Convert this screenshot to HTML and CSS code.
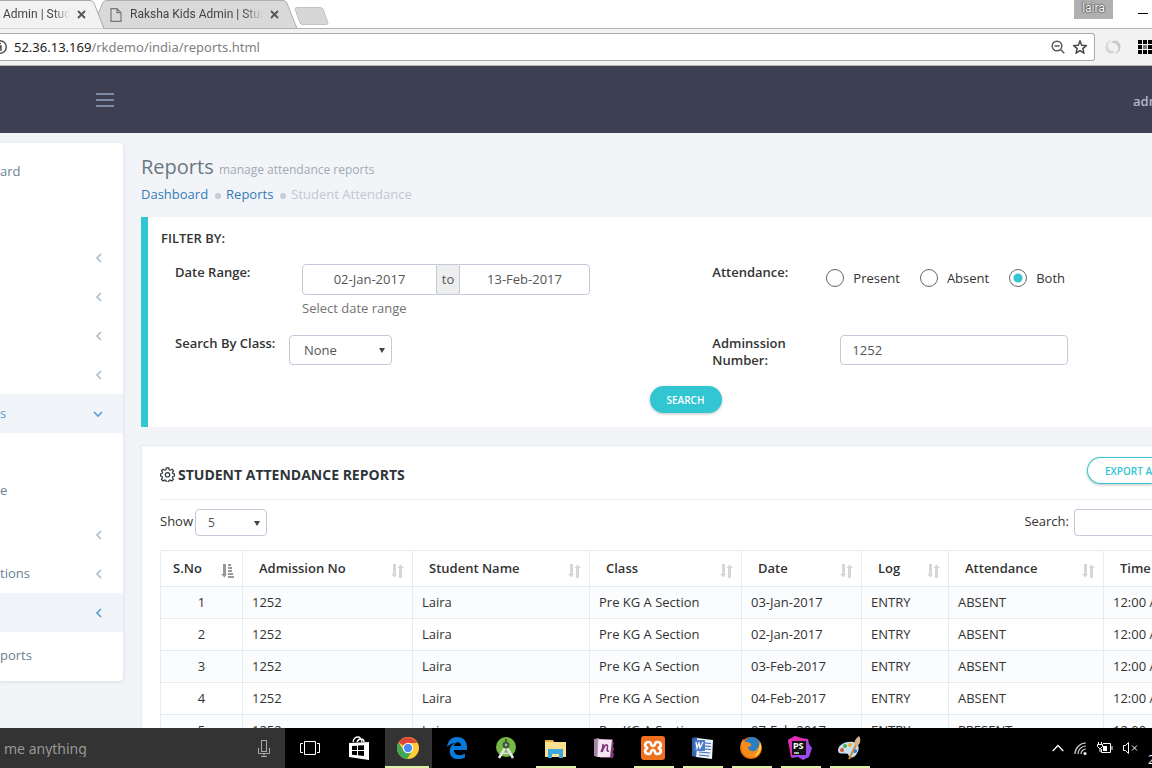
FILE: index.html
```
<!DOCTYPE html>
<html lang="en">
<head>
    <meta charset="UTF-8">
    <meta name="viewport" content="width=device-width, initial-scale=1.0">
    <title>Raksha Kids Admin | Student Attendance</title>
    <link rel="stylesheet" href="styles.css">
</head>
<body>
<svg class="sprite" aria-hidden="true">
    <symbol id="left" viewBox="0 0 8 10"><path d="M6 1L2 5l4 4" fill="none" stroke="currentColor" stroke-width="1.6"/></symbol>
    <symbol id="down" viewBox="0 0 10 8"><path d="M1 2l4 4 4-4" fill="none" stroke="currentColor" stroke-width="1.6"/></symbol>
    <symbol id="close" viewBox="0 0 9 9"><path d="M1 1l7 7M8 1L1 8" stroke="currentColor" stroke-width="1.8"/></symbol>
    <symbol id="sort" viewBox="0 0 13 14"><path d="M2 0h3v10h1L3.500 13.500 0 10h2zM8 14h3V4h2L9.500.5 6.500 4H8z" fill="#d6d6d6"/></symbol>
    <symbol id="sort-asc" viewBox="0 0 13 14"><path d="M2 0h3v10h1L3.500 13.500 0 10h2zM7 0h3v2H7zM7 3h4v2H7zM7 6h4v2H7zM7 9h5v2H7zM7 12h6v2H7z" fill="#999"/></symbol>
</svg>

<!-- browser -->
<div class="tabs">
    <div class="tab tab-active">
        <svg class="tab-shape" width="106" height="29" viewBox="0 0 106 29"><path d="M0 .5H90Q93 .5 94 3L104 28.500H0z" fill="#f2f2f2"/><path d="M0 .5H90Q93 .5 94 3L104 28.500" fill="none" stroke="#a9a9a9"/></svg>
        <span class="tab-title">Admin | Stud</span>
        <button class="tab-close" aria-label="Close tab"><svg width="9" height="9"><use href="#close"/></svg></button>
    </div>
    <div class="tab tab-back">
        <svg class="tab-shape" width="202" height="29" viewBox="0 0 202 29"><path d="M1 14L5.500 3Q6.500.5 10 .5H186Q189 .5 190 3L200 28.500H7z" fill="#d9d9d9" stroke="#b0b0b0"/></svg>
        <svg class="tab-page" width="12" height="14" viewBox="0 0 12 14"><path d="M1 .7h6l4 4v8.600H1zM7 .7v4h4" fill="none" stroke="#777" stroke-width="1.2"/></svg>
        <span class="tab-title">Raksha Kids Admin | Stud</span>
        <button class="tab-close" aria-label="Close tab"><svg width="9" height="9"><use href="#close"/></svg></button>
    </div>
    <button class="tab-new" aria-label="New tab"><svg width="36" height="18" viewBox="0 0 36 18"><path d="M1 2Q1 .5 3 .5H26Q28 .5 29 2L34 16Q34 17.500 32 17.500H9Q7 17.500 6 16z" fill="#d6d6d6" stroke="#c2c2c2"/></svg></button>
    <span class="user-chip">laira</span>
    <button class="minimize" aria-label="Minimize"></button>
</div>
<div class="toolbar">
    <div class="omnibox">
        <svg width="8" height="16" viewBox="8 0 8 16"><circle cx="8" cy="8" r="6.300" fill="none" stroke="#555" stroke-width="1.5"/><path d="M8 4.500h1M8 7h1v5" stroke="#555" stroke-width="1.5"/></svg>
        <span class="url">52.36.13.169<span class="path">/rkdemo/india/reports.html</span></span>
        <svg class="zoom" width="14" height="14" viewBox="0 0 14 14"><g fill="none" stroke="#555" stroke-width="1.4"><circle cx="6" cy="6" r="4.800"/><path d="M3.500 6h5M9.500 9.500L13.300 13.300"/></g></svg>
        <svg width="14" height="14" viewBox="0 0 14 14"><path d="M7 1l1.700 4.300 4.600.3-3.500 3 1.100 4.500L7 10.600l-3.900 2.500 1.100-4.500-3.500-3 4.600-.3z" fill="none" stroke="#444" stroke-width="1.4"/></svg>
    </div>
    <svg class="ext" width="16" height="16" viewBox="0 0 16 16"><path d="M7 1A7 7 0 0 0 5 14.500Q9 15 10 12A5 5 0 0 1 7 1z" fill="#d6d6d6"/><path d="M9 15A7 7 0 0 0 11 1.500Q7 1 6 4A5 5 0 0 1 9 15z" fill="#c8c8c8"/></svg>
    <svg class="apps" width="14" height="14" viewBox="0 0 14 14"><path d="M0 0h4v4H0zM5 0h4v4H5zM10 0h4v4h-4zM0 5h4v4H0zM10 5h4v4h-4zM0 10h4v4H0zM5 10h4v4H5zM10 10h4v4h-4z" fill="#000"/><path d="M5 5h4v4H5z" fill="#777"/></svg>
</div>

<!-- site -->
<header class="header">
    <button class="menu-toggle" aria-label="Toggle menu"><i></i><i></i><i></i></button>
    <a class="account" href="#">admin</a>
</header>
<div class="page">
    <nav class="sidebar">
        <ul class="nav">
            <li><a href="#">ard</a></li>
            <li class="nav-heading"></li>
            <li><a href="#" aria-label="Section"><svg width="8" height="10"><use href="#left"/></svg></a></li>
            <li><a href="#" aria-label="Section"><svg width="8" height="10"><use href="#left"/></svg></a></li>
            <li><a href="#" aria-label="Section"><svg width="8" height="10"><use href="#left"/></svg></a></li>
            <li><a href="#" aria-label="Section"><svg width="8" height="10"><use href="#left"/></svg></a></li>
            <li class="active"><a href="#">s<svg width="10" height="8"><use href="#down"/></svg></a>
                <ul class="sub">
                    <li><a href="#">e</a></li>
                </ul>
            </li>
            <li><a href="#" aria-label="Section"><svg width="8" height="10"><use href="#left"/></svg></a></li>
            <li><a href="#">tions<svg width="8" height="10"><use href="#left"/></svg></a></li>
            <li class="active"><a href="#" aria-label="Section"><svg width="8" height="10"><use href="#left"/></svg></a>
                <ul class="sub sub-last">
                    <li><a href="#">ports</a></li>
                </ul>
            </li>
        </ul>
    </nav>

    <main class="content">
        <h1>Reports <small>manage attendance reports</small></h1>
        <ul class="breadcrumb">
            <li><a href="#">Dashboard</a></li>
            <li><a href="#">Reports</a></li>
            <li>Student Attendance</li>
        </ul>

        <form class="filter">
            <h2>FILTER BY:</h2>
            <div class="filter-grid">
                <div class="field date-field">
                    <label class="name" for="from">Date Range:</label>
                    <div class="range">
                        <div class="input-group">
                            <input type="text" id="from" value="02-Jan-2017">
                            <span class="addon">to</span>
                            <input type="text" aria-label="To date" value="13-Feb-2017">
                        </div>
                        <span class="help">Select date range</span>
                    </div>
                </div>
                <div class="field">
                    <span class="name" id="att">Attendance:</span>
                    <div class="radios" role="radiogroup" aria-labelledby="att">
                        <label><input type="radio" name="attendance">Present</label>
                        <label><input type="radio" name="attendance">Absent</label>
                        <label><input type="radio" name="attendance" checked>Both</label>
                    </div>
                </div>
                <div class="field class-field">
                    <label class="name" for="class">Search By Class:</label>
                    <div class="select"><select id="class"><option>None</option></select></div>
                </div>
                <div class="field">
                    <label class="name" for="admission">Adminssion Number:</label>
                    <input type="text" class="admission" id="admission" value="1252">
                </div>
            </div>
            <button type="button" class="btn btn-search">SEARCH</button>
        </form>

        <section class="card">
            <div class="card-title">
                <svg width="15" height="15" viewBox="0 0 15 15"><g fill="none" stroke="#2f353b" stroke-width="1.2"><path d="M6.300.8h2.400l.4 1.900 1.200.5 1.700-1 1.500 1.600-1 1.600.5 1.200 1.600.3v2.200l-1.700.4-.5 1.200 1 1.600-1.600 1.600-1.600-1-1.200.5-.4 1.700H6.300l-.4-1.700-1.200-.5-1.600 1-1.600-1.600 1-1.600L2 9.500.500 9.100V6.900L2 6.600l.5-1.300-1-1.600L3.100 2.200l1.600 1 1.200-.5z"/><circle cx="7.500" cy="7.800" r="2.200"/></g></svg>
                <h2>STUDENT ATTENDANCE REPORTS</h2>
                <button class="btn btn-export">EXPORT AS</button>
            </div>
            <div class="table-tools">
                <label for="len">Show</label>
                <div class="select select-small"><select id="len"><option>5</option></select></div>
                <label class="search-label" for="q">Search:</label>
                <input type="search" id="q">
            </div>
            <table>
                <colgroup><col class="c-no"><col class="c-adm"><col class="c-name"><col class="c-class"><col class="c-date"><col class="c-log"><col class="c-att"><col></colgroup>
                <thead>
                <tr>
                    <th><span>S.No<svg width="13" height="14"><use href="#sort-asc"/></svg></span></th>
                    <th><span>Admission No<svg width="13" height="14"><use href="#sort"/></svg></span></th>
                    <th><span>Student Name<svg width="13" height="14"><use href="#sort"/></svg></span></th>
                    <th><span>Class<svg width="13" height="14"><use href="#sort"/></svg></span></th>
                    <th><span>Date<svg width="13" height="14"><use href="#sort"/></svg></span></th>
                    <th><span>Log<svg width="13" height="14"><use href="#sort"/></svg></span></th>
                    <th><span>Attendance<svg width="13" height="14"><use href="#sort"/></svg></span></th>
                    <th><span>Time</span></th>
                </tr>
                </thead>
                <tbody>
                <tr><td>1</td><td>1252</td><td>Laira</td><td>Pre KG A Section</td><td>03-Jan-2017</td><td>ENTRY</td><td>ABSENT</td><td>12:00 AM</td></tr>
                <tr><td>2</td><td>1252</td><td>Laira</td><td>Pre KG A Section</td><td>02-Jan-2017</td><td>ENTRY</td><td>ABSENT</td><td>12:00 AM</td></tr>
                <tr><td>3</td><td>1252</td><td>Laira</td><td>Pre KG A Section</td><td>03-Feb-2017</td><td>ENTRY</td><td>ABSENT</td><td>12:00 AM</td></tr>
                <tr><td>4</td><td>1252</td><td>Laira</td><td>Pre KG A Section</td><td>04-Feb-2017</td><td>ENTRY</td><td>ABSENT</td><td>12:00 AM</td></tr>
                <tr><td>5</td><td>1252</td><td>Laira</td><td>Pre KG A Section</td><td>07-Feb-2017</td><td>ENTRY</td><td>PRESENT</td><td>12:00 AM</td></tr>
                </tbody>
            </table>
        </section>
    </main>
</div>

<!-- taskbar -->
<footer class="taskbar">
    <div class="cortana">
        <input type="text" aria-label="Search" placeholder="me anything">
        <svg width="12" height="17" viewBox="0 0 12 17"><g fill="none" stroke="#aaa"><rect x="3.500" y=".5" width="5" height="11"/><path d="M.5 8v5.500h11V8M6 13.500v3M3 16.500h6"/></g></svg>
    </div>
    <button class="task" aria-label="Task view"><svg width="20" height="14" viewBox="0 0 20 14"><path d="M4.500.5h11v13h-11zM3 2.500H.5v9H3M17 2.500h2.500v9H17" fill="none" stroke="#fff"/></svg></button>
    <button class="task" aria-label="Store"><svg width="22" height="24" viewBox="0 0 22 24"><path d="M5 6Q6 1 10 1q3 0 4 5M9 6q1-3 4-3 3 0 3 3" fill="none" stroke="#fff" stroke-width="1.3"/><path d="M1 7l20-1v18L1 21z" fill="#fff"/><path d="M4 10l5-.3V14H4zM10 9.600l6-.4V14h-6zM4 15h5v4.200L4 18.700zM10 15h6v5l-6-.7z" fill="#000"/></svg></button>
    <button class="task open current" aria-label="Chrome"><svg width="22" height="22" viewBox="0 0 22 22"><circle cx="11" cy="11" r="11" fill="#fc3"/><path d="M11 11L1.500 5.500A11 11 0 0 1 20.500 6H11z" fill="#e0453a"/><path d="M1.500 5.500A11 11 0 0 0 10 22l5.500-8.500-4.500 2-4-1.500z" fill="#3fa757"/><circle cx="11" cy="11" r="5.200" fill="#fff"/><circle cx="11" cy="11" r="4.200" fill="#4a8af4"/></svg></button>
    <button class="task" aria-label="Edge"><svg width="22" height="22" viewBox="0 0 22 22"><path d="M1 10C2 3 6 0 11 0c7 0 10 5 10 10v3H8c0 6 7 6 11 3.500v4C10 25 2 20 4 12c.5-3 3-5 5-6-3 0-6 2-8 4zM8 9h7c0-5-6-5-7 0z" fill="#0a78d7"/></svg></button>
    <button class="task" aria-label="Android Studio"><svg width="22" height="24" viewBox="0 0 22 24"><circle cx="11" cy="11" r="10" fill="#75b843"/><path d="M10 12L4 22M12 12l6 10" stroke="#e6e6e6" stroke-width="2.500"/><path d="M6 16q5 3 10 0" fill="none" stroke="#ddd" stroke-width="1.500"/><path d="M11 3v4" stroke="#455a45" stroke-width="2"/><circle cx="11" cy="9" r="3.500" fill="#455a45"/><circle cx="11" cy="9" r="1.200" fill="#9c9"/></svg></button>
    <button class="task open" aria-label="Explorer"><svg width="22" height="19" viewBox="0 0 22 19"><path d="M1 1h8l1 2h12v15H1z" fill="#fbe08f"/><path d="M1 1h8v2H1z" fill="#e8b33c"/><path d="M4 10h15v9h-4v-4H8v4H4z" fill="#39a9e0"/></svg></button>
    <button class="task" aria-label="OneNote"><svg width="22" height="22" viewBox="0 0 22 22"><path d="M7 2h13v3l1 1-1 3 1 3-1 3 1 2-1 4H7z" fill="#80397b"/><path d="M1 2l5-1v19l-5-1z" fill="#a684a8"/><path d="M5 2l14 1-2 17H4z" fill="#f3e9f3"/><path d="M5 2l-1 18" stroke="#b99cba"/><path d="M8 15c2-3 2-5 2-8 0 4 0 6-1 8 2-5 3-8 5-7 2 1-2 7 2 6" fill="none" stroke="#80397b" stroke-width="1.600"/></svg></button>
    <button class="task open" aria-label="XAMPP"><svg width="24" height="24" viewBox="0 0 24 24"><rect width="24" height="24" rx="3" fill="#ef7120"/><path d="M8 6c-5 0-5 5-1 6-4 1-4 6 1 6 3 0 1-4 4-4s1 4 4 4c5 0 5-5 1-6 4-1 4-6-1-6-3 0-1 4-4 4s-1-4-4-4z" fill="none" stroke="#fff" stroke-width="2.600"/></svg></button>
    <button class="task open" aria-label="Word"><svg width="22" height="22" viewBox="0 0 22 22"><path d="M6 1l16 2-1 19-16-2z" fill="#eef3fb"/><path d="M14 6l6 .5M14 9l6 .5M14 12l6 .5M8 15l11 1M8 18l10 1" stroke="#3c6cb5" stroke-width="1.200"/><path d="M1 1l5-1-1 20-4-1z" fill="#3465ae"/><path d="M4 3h10v11H3z" fill="#4a7bc8"/><path d="M5 5l1 6 2-5 1 5 3-6" fill="none" stroke="#fff" stroke-width="1.300"/></svg></button>
    <button class="task open" aria-label="Firefox"><svg width="22" height="22" viewBox="0 0 22 22"><circle cx="11" cy="11" r="11" fill="#e66000"/><circle cx="12" cy="8" r="8" fill="#2b7dc4"/><path d="M1 6l2-4 3 3c4 0 6 2 5 4l-3 1c0 4 6 6 9 2 2-2 3-4 2-8 4 6 2 13-4 16-8 3-15-3-14-14z" fill="#f48b1c"/><path d="M20 5c3 6 0 13-6 15 3-3 5-7 6-15z" fill="#ffd34d"/></svg></button>
    <button class="task open" aria-label="PhpStorm"><svg width="24" height="24" viewBox="0 0 24 24"><path d="M0 4L7 0l5 2 8 1 1 5 3 4-3 9-6 3-5-3-6 1z" fill="#9a4ae8"/><path d="M0 4L7 0l13 4-17 18z" fill="#e52db0"/><rect x="4" y="5" width="14" height="14" fill="#111"/><text x="5" y="13" class="ps">PS</text><path d="M6 17h5" stroke="#fff" stroke-width="1.300"/></svg></button>
    <button class="task open" aria-label="Paint"><svg width="24" height="24" viewBox="0 0 24 24"><path d="M1 14C2 8 9 5 16 6c7 1 7 8 3 13-4 4-7 3-8-1-2-2-10 2-10-4z" fill="#c5e0f2"/><circle cx="5" cy="14" r="2" fill="#e1503c"/><circle cx="8" cy="10" r="2" fill="#4cae4c"/><circle cx="13" cy="9" r="2" fill="#f0ad2e"/><circle cx="18" cy="15" r="2" fill="#3478c8"/><path d="M12 23l7-14" stroke="#d08a3a" stroke-width="2"/><path d="M17 9c0-4 2-7 5-9l1 2c1 4-1 7-3 8z" fill="#d9b48a"/></svg></button>
    <div class="tray">
        <svg width="12" height="8" viewBox="0 0 12 8"><path d="M.7 7L6 1.500 11.300 7" fill="none" stroke="#fff" stroke-width="1.300"/></svg>
        <svg width="13" height="13" viewBox="0 0 13 13"><g fill="none" stroke="#ccc" stroke-width="1.200"><path d="M1 12A11 11 0 0 1 12 1M4 12a8 8 0 0 1 8-8M7 12a5 5 0 0 1 5-5"/></g><circle cx="11" cy="11.500" r="1.500" fill="#fff"/></svg>
        <svg width="16" height="12" viewBox="0 0 16 12"><path d="M6 1.500h7.500v9H4.500V7M15 4v4M1.500 0v2M4.500 0v2M.5 2.500h5v2l-2 2h-1l-2-2zM3 6v4" fill="none" stroke="#fff"/><path d="M6 4h4v5H6z" fill="#fff"/></svg>
        <svg width="15" height="12" viewBox="0 0 15 12"><path d="M.5 3.500h2l3-3v11l-3-3h-2zM9 3.500l5 5M14 3.500l-5 5" fill="none" stroke="#fff"/></svg>
        <span class="clock">2</span>
    </div>
</footer>
</body>
</html>
```
FILE: styles.css
```
* {
    box-sizing: border-box;
}

body {
    margin: 0;
    display: flex;
    flex-direction: column;
    height: 100vh;
    overflow: hidden;
    font-family: "Open Sans", sans-serif;
    font-size: 13px;
    line-height: 17px;
    color: #333;
    background-color: #f3f4f8;
}

ul {
    list-style: none;
    margin: 0;
    padding: 0;
}

h1, h2 {
    margin: 0;
}

a {
    text-decoration: none;
}

button {
    padding: 0;
    border: none;
    background: none;
    cursor: pointer;
}

input, select {
    font: inherit;
    color: #555;
    background-color: #fff;
    border: 1px solid #c2cad8;
    border-radius: 4px;
}

.sprite {
    display: none;
}

/* browser */
.tabs {
    display: flex;
    flex: none;
    height: 29px;
    background-color: #fff;
    border-bottom: 1px solid #b4b4b4;
    font-family: Roboto, sans-serif;
    font-size: 12px;
}

.tab {
    position: relative;
    display: flex;
    align-items: center;
    height: 29px;
    color: #444;
}

.tab-active {
    width: 97px;
    padding-left: 3px;
    z-index: 1;
}

.tab-back {
    width: 197px;
    padding-left: 13px;
}

.tab-shape {
    position: absolute;
    top: 0;
    left: 0;
}

.tab-page, .tab-title, .tab-close {
    position: relative;
    flex: none;
}

.tab-page {
    margin-right: 8px;
}

.tab-title {
    width: 67px;
    overflow: hidden;
    white-space: nowrap;
    mask-image: linear-gradient(to right, #000 75%, transparent);
}

.tab-back .tab-title {
    width: 133px;
    mask-image: linear-gradient(to right, #000 85%, transparent);
}

.tab-close {
    display: flex;
    margin-left: 7px;
    color: #555;
}

.tab-new {
    align-self: flex-start;
    margin-top: 7px;
    height: 18px;
}

.user-chip {
    align-self: flex-start;
    width: 39px;
    height: 19px;
    margin-left: auto;
    background-color: #b0b0b0;
    color: #fff;
    text-align: center;
    text-shadow: 0 0 2px #222, 0 0 1px #222;
}

.minimize {
    align-self: flex-start;
    width: 10px;
    height: 1px;
    margin: 13px 4px 0 25px;
    background-color: #000;
}

.toolbar {
    display: flex;
    flex: none;
    align-items: center;
    height: 37px;
    background-color: #f2f2f2;
    border-bottom: 1px solid #b4b4b4;
}

.omnibox {
    display: flex;
    flex: 1;
    align-items: center;
    height: 28px;
    padding-right: 7px;
    background-color: #fff;
    border: 1px solid #a9a9a9;
    border-left: none;
    border-radius: 0 3px 3px 0;
}

.url {
    flex: 1;
    margin-left: 6px;
    font-family: "Noto Sans", sans-serif;
    font-size: 13px;
    color: #222;
}

.path {
    color: #808080;
}

.zoom {
    margin-right: 8px;
}

.ext {
    margin-left: 10px;
}

.apps {
    margin-left: 17px;
}

/* site header */
.header {
    display: flex;
    flex: none;
    align-items: center;
    justify-content: space-between;
    height: 67px;
    padding-left: 96px;
    overflow: hidden;
    background-color: #3d3f52;
}

.menu-toggle {
    display: flex;
    flex-direction: column;
    gap: 4px;
    width: 18px;
}

.menu-toggle i {
    height: 2px;
    background-color: #7f89a1;
}

.account {
    width: 19px;
    margin-top: 4px;
    overflow: hidden;
    white-space: nowrap;
    font-weight: 600;
    color: #aeb9d1;
}

.page {
    display: flex;
    flex: 1;
    min-height: 0;
    overflow: hidden;
}

/* sidebar */
.sidebar {
    align-self: flex-start;
    flex: none;
    width: 123px;
    margin-top: 10px;
    padding: 9px 0 6px;
    background-color: #fff;
    border-radius: 0 4px 4px 0;
    box-shadow: 0 1px 4px rgba(80, 90, 120, 0.15);
}

.nav a {
    display: flex;
    align-items: center;
    height: 39px;
    padding-right: 20px;
    color: #6b7f92;
}

.nav svg {
    margin-left: auto;
    color: #a7bdcd;
}

.nav-heading {
    height: 47px;
}

.nav .active > a {
    background-color: #f1f5f9;
    color: #5b9bd1;
}

.nav .active > a svg {
    color: #5b9bd1;
}

.sub {
    padding: 38px 0 5px;
}

.sub-last {
    padding: 4px 0 0;
}

/* content */
.content {
    flex: 1;
    min-width: 0;
    padding: 20px 0 0 18px;
}

h1 {
    font-size: 20px;
    font-weight: 400;
    line-height: 28px;
    color: #697882;
}

h1 small {
    font-size: 12px;
    color: #9eacb4;
}

.breadcrumb {
    display: flex;
    line-height: 27px;
    margin-top: -3px;
    color: #c0c8d4;
}

.breadcrumb a {
    color: #337ab7;
}

.breadcrumb li + li::before {
    content: "";
    display: inline-block;
    width: 6px;
    height: 6px;
    margin: 0 5px 0 7px;
    border-radius: 50%;
    background-color: #c5ccd8;
}

.filter {
    margin-top: 9px;
    padding: 13px 0 14px 13px;
    background-color: #fff;
    border-left: 7px solid #32c5d2;
}

.filter h2 {
    font-size: 13px;
    font-weight: 600;
    line-height: 17px;
}

.filter-grid {
    display: grid;
    grid-template-columns: 55% 45%;
    row-gap: 18px;
    margin: 17px 0 17px 14px;
}

.field {
    display: flex;
    align-items: flex-start;
}

.name {
    width: 128px;
    padding-right: 40px;
    font-weight: 600;
}

.date-field .name, .class-field .name {
    padding-right: 0;
}

.date-field .name {
    width: 127px;
}

.class-field .name {
    width: 114px;
}

.input-group {
    display: flex;
    width: 288px;
    height: 31px;
}

.input-group input {
    flex: 1;
    min-width: 0;
    text-align: center;
}

.input-group input:first-child {
    flex: none;
    width: 135px;
    border-radius: 4px 0 0 4px;
}

.input-group input:last-child {
    border-radius: 0 4px 4px 0;
}

.addon {
    width: 22px;
    background-color: #eee;
    border: solid #c2cad8;
    border-width: 1px 0;
    line-height: 29px;
    text-align: center;
    color: #555;
}

.help {
    display: block;
    margin-top: 4px;
    line-height: 18px;
    color: #737373;
}

.radios {
    display: flex;
    gap: 20px;
    margin: 5px 0 0 -14px;
}

.radios label {
    display: flex;
    align-items: center;
    gap: 9px;
}

.radios input {
    appearance: none;
    width: 18px;
    height: 18px;
    margin: 0;
    border: 1px solid #666;
    border-radius: 50%;
}

.radios input:checked {
    background: radial-gradient(circle, #32c5d2 4px, transparent 5px);
}

.select {
    position: relative;
    width: 103px;
}

.select::after {
    content: "";
    position: absolute;
    top: 50%;
    right: 7px;
    margin-top: -2px;
    border: 3px solid transparent;
    border-top: 5px solid #444;
    border-bottom: none;
}

.select select {
    appearance: none;
    display: block;
    width: 100%;
    height: 30px;
    padding: 0 14px;
}

.select-small {
    width: 72px;
}

.select-small select {
    height: 27px;
    padding: 0 12px;
    font-size: 12px;
}

.admission {
    width: 228px;
    height: 30px;
    padding: 0 11px;
}

.btn {
    font-family: inherit;
    font-size: 10px;
    font-weight: 600;
    line-height: 14px;
    border-radius: 14px;
    box-shadow: 0 1px 3px rgba(0, 0, 0, 0.25);
}

.btn-search {
    display: block;
    width: 72px;
    height: 27px;
    margin-left: calc(50% - 7px);
    background-color: #32c5d2;
    color: #fff;
}

.btn-export {
    flex: none;
    width: 65px;
    height: 27px;
    margin: -8px 0 0 auto;
    padding-left: 17px;
    overflow: hidden;
    border: 1px solid #32c5d2;
    border-right: none;
    border-radius: 14px 0 0 14px;
    background-color: #fff;
    color: #32c5d2;
    text-align: left;
    white-space: nowrap;
}

.card {
    margin-top: 18px;
    padding-left: 18px;
    background-color: #fff;
    border: 1px solid #e7ecf1;
    border-right: none;
}

.card-title {
    display: flex;
    align-items: center;
    height: 54px;
    padding-top: 4px;
    border-bottom: 1px solid #eef1f5;
}

.card-title h2 {
    margin-left: 3px;
    font-size: 14px;
    font-weight: 700;
    line-height: 20px;
    white-space: nowrap;
    color: #2f353b;
}

.table-tools {
    display: flex;
    align-items: center;
    height: 27px;
    margin: 9px 0 14px;
}

.table-tools label {
    margin-top: -2px;
}

.table-tools .select {
    margin-left: 2px;
}

.table-tools .search-label {
    margin-left: auto;
}

.table-tools input {
    width: 78px;
    height: 27px;
    margin-left: 5px;
    border-right: none;
    border-radius: 4px 0 0 4px;
}

/* attendance table */
table {
    width: 100%;
    table-layout: fixed;
    border-collapse: collapse;
}

th, td {
    height: 32px;
    padding: 0 9px;
    overflow: hidden;
    border: 1px solid #e7ecf1;
    text-align: left;
    white-space: nowrap;
}

th:last-child, td:last-child {
    padding-right: 0;
    border-right: none;
}

th {
    height: 36px;
    padding: 0 8px 0 16px;
    font-weight: 600;
}

th:first-child {
    padding-left: 12px;
}

th span {
    display: flex;
    justify-content: space-between;
}

th svg {
    margin-top: 4px;
}

td:first-child {
    text-align: center;
}

tbody tr:nth-child(odd) {
    background-color: #fbfcfd;
}

.c-no {
    width: 82px;
}

.c-adm {
    width: 170px;
}

.c-name {
    width: 177px;
}

.c-class {
    width: 152px;
}

.c-date {
    width: 120px;
}

.c-log {
    width: 87px;
}

.c-att {
    width: 155px;
}

/* taskbar */
.taskbar {
    position: relative;
    z-index: 1;
    display: flex;
    flex: none;
    height: 40px;
    background-color: #000;
}

.cortana {
    display: flex;
    align-items: center;
    width: 285px;
    padding: 0 15px 0 4px;
    background-color: #333;
}

.cortana input {
    flex: 1;
    padding: 0;
    border: none;
    background: none;
    font-family: "Noto Sans", sans-serif;
    font-size: 14px;
}

.cortana input::placeholder {
    color: #999;
}

.task {
    position: relative;
    display: flex;
    align-items: center;
    justify-content: center;
    width: 49px;
}

.open::after {
    content: "";
    position: absolute;
    left: 6px;
    right: 3px;
    bottom: 0;
    height: 2px;
    background-color: #dcf0a8;
}

.current {
    background: linear-gradient(to right, #000 2px, #333 2px);
}

.current::after {
    left: 2px;
}

.ps {
    font: 700 9px "Noto Sans", sans-serif;
    fill: #fff;
}

.tray {
    display: flex;
    align-items: center;
    gap: 10px;
    width: 100px;
    margin-left: auto;
    overflow: hidden;
}

.tray svg {
    flex: none;
}

.clock {
    align-self: flex-end;
    color: #fff;
    font-size: 12px;
}
```
